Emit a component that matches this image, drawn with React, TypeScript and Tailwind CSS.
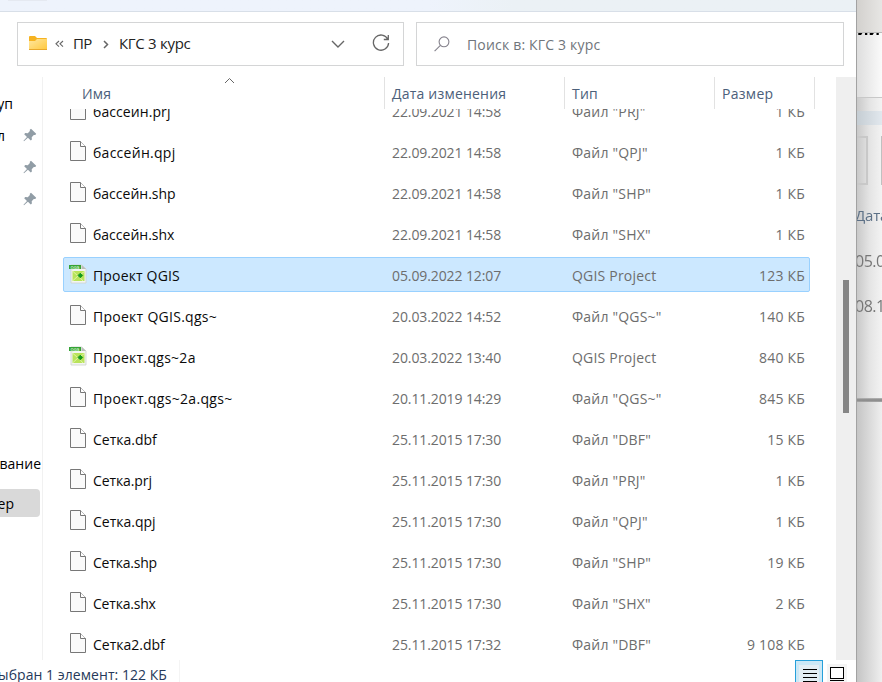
import React from "react";

type Row = { name: string; date: string; type: string; size: string; qgis?: boolean; selected?: boolean; tracking: string };

const wide = "tracking-[0.27px]";
const mid = "tracking-[0.16px]";
const tight = "tracking-[0px]";

const rows: Row[] = [
  { name: "бассейн.prj", date: "22.09.2021 14:58", type: 'Файл "PRJ"', size: "1 КБ", tracking: "tracking-[0.08px]" },
  { name: "бассейн.qpj", date: "22.09.2021 14:58", type: 'Файл "QPJ"', size: "1 КБ", tracking: wide },
  { name: "бассейн.shp", date: "22.09.2021 14:58", type: 'Файл "SHP"', size: "1 КБ", tracking: tight },
  { name: "бассейн.shx", date: "22.09.2021 14:58", type: 'Файл "SHX"', size: "1 КБ", tracking: tight },
  { name: "Проект QGIS", date: "05.09.2022 12:07", type: "QGIS Project", size: "123 КБ", qgis: true, selected: true, tracking: mid },
  { name: "Проект QGIS.qgs~", date: "20.03.2022 14:52", type: 'Файл "QGS~"', size: "140 КБ", tracking: wide },
  { name: "Проект.qgs~2a", date: "20.03.2022 13:40", type: "QGIS Project", size: "840 КБ", qgis: true, tracking: wide },
  { name: "Проект.qgs~2a.qgs~", date: "20.11.2019 14:29", type: 'Файл "QGS~"', size: "845 КБ", tracking: "tracking-[0.33px]" },
  { name: "Сетка.dbf", date: "25.11.2015 17:30", type: 'Файл "DBF"', size: "15 КБ", tracking: tight },
  { name: "Сетка.prj", date: "25.11.2015 17:30", type: 'Файл "PRJ"', size: "1 КБ", tracking: "tracking-[-0.1px]" },
  { name: "Сетка.qpj", date: "25.11.2015 17:30", type: 'Файл "QPJ"', size: "1 КБ", tracking: tight },
  { name: "Сетка.shp", date: "25.11.2015 17:30", type: 'Файл "SHP"', size: "19 КБ", tracking: "tracking-[-0.2px]" },
  { name: "Сетка.shx", date: "25.11.2015 17:30", type: 'Файл "SHX"', size: "2 КБ", tracking: "tracking-[-0.2px]" },
  { name: "Сетка2.dbf", date: "25.11.2015 17:32", type: 'Файл "DBF"', size: "9 108 КБ", tracking: tight },
];

function FileIcon() {
  return (
    <svg width="16" height="20" viewBox="0 0 16 20" fill="none" className="block">
      <path d="M.5 .5H10.5L15.5 5.5V19.5H.5Z" fill="#fafafa" stroke="#777" />
      <path d="M10.5 .5V5.5H15.5" fill="#fff" stroke="#777" />
    </svg>
  );
}

function QgisIcon() {
  return (
    <svg width="18" height="20" viewBox="0 0 18 20" className="block">
      <path d="M2 1H13L17 5V19H2Z" fill="#f3f5f2" stroke="#cdd2cd" strokeWidth=".8" />
      <path d="M12.5 1V5H17Z" fill="#b9bdb9" />
      <rect x="0" y="1" width="12" height="4" fill="#35a336" />
      <text x="6" y="4.5" textAnchor="middle" fontSize="4" fontWeight="700" fill="#d8f5d0" fontFamily="Liberation Sans, sans-serif">QGS</text>
      <rect x="3.5" y="7" width="12" height="10" fill="#b9e35a" />
      <path d="M3.5 7 9 12 15.5 7.5M9 12 3.5 17M10 12.5 14 17" stroke="#e9f7b8" strokeWidth=".8" fill="none" />
      <path d="M11.3 9.2 13.6 11.5 11.3 13.8 9 11.5Z" fill="#159a1b" stroke="#159a1b" strokeLinejoin="round" />
    </svg>
  );
}

function Pin() {
  return (
    <svg width="14" height="14" viewBox="0 0 14 14" className="block">
      <path d="M8 .8 13.2 5.8 12.3 7 10.8 6.9 8.7 9.2 8.9 11.6 7.8 12.6 4.9 9.8 1 13.2.5 12.8 4 8.9 1.2 6.2 2.2 5.1 4.8 5.2 6.9 3.1 6.8 1.8Z" fill="#919da6" />
    </svg>
  );
}

function NavigationBar() {
  return (
    <div className="flex h-[65px] shrink-0 pt-2.5 pl-[17px]">
      <div className="flex h-11 w-[387px] items-center border border-[#d4d5d6]">
        <svg width="20" height="16" viewBox="0 0 20 16" className="-mt-0.5 ml-2.5 shrink-0">
          <defs>
            <linearGradient id="folder" x1="0" y1="0" x2="1" y2="1">
              <stop offset="0" stopColor="#ffe7a0" />
              <stop offset="1" stopColor="#ffc83c" />
            </linearGradient>
          </defs>
          <path d="M1 2Q1 1 2 1H7L9 3H18Q19 3 19 4V14H1Z" fill="#f6b321" />
          <path d="M1 6H7L9 4H19V14Q19 15 18 15H2Q1 15 1 14Z" fill="url(#folder)" />
          <path d="M1 14.5H19" stroke="#e9a82c" />
        </svg>
        <svg width="9" height="8" viewBox="0 0 9 8" fill="none" stroke="#666" strokeWidth="1.1" className="ml-[7px] shrink-0"><path d="M4 1 1 3.8 4 6.6M8 1 5 3.8 8 6.6" /></svg>
        <span className="ml-[9px] w-[22px] text-[15px] tracking-[-0.6px] text-[#222]">ПР</span>
        <svg width="6" height="9" viewBox="0 0 6 9" fill="none" stroke="#666" strokeWidth="1.5" className="ml-[8px] shrink-0"><path d="M1 1 4.5 4.5 1 8" /></svg>
        <span className="ml-[10px] w-[80px] text-[15px] tracking-[-0.3px] whitespace-nowrap text-[#222]">КГС 3 курс</span>
        <svg width="14" height="8" viewBox="0 0 14 8" fill="none" stroke="#666" strokeWidth="1.4" className="ml-auto shrink-0"><path d="M1 1 7 7 13 1" /></svg>
        <svg width="18" height="18" viewBox="0 0 18 18" fill="none" stroke="#666" strokeWidth="1.3" className="-mt-0.5 mr-[13px] ml-[27px] shrink-0"><path d="M15.8 5.2A7.6 7.6 0 1 0 16.6 9M16.3 1V5.5H11.8" /></svg>
      </div>
      <div className="ml-3 flex h-11 w-[428px] items-center border border-[#d4d5d6]">
        <svg width="16" height="16" viewBox="0 0 16 16" fill="none" stroke="#85828c" strokeWidth="1.1" className="ml-[17px]"><circle cx="10" cy="5.8" r="4.9" /><path d="M6.4 9.3.6 15.2" /></svg>
        <span className="ml-[17px] pt-0.5 tracking-[0.18px] text-[#70757b]">Поиск в: КГС 3 курс</span>
      </div>
    </div>
  );
}

function Sidebar() {
  return (
    <div className="flex w-[43px] shrink-0 flex-col overflow-hidden border-r border-[#f1f1f1] pt-[11px] text-black">
      <div className="flex h-8 w-[13px] items-center justify-end">уп</div>
      <div className="flex h-8 items-center">
        <span className="flex w-[5px] justify-end">л</span>
        <span className="-mt-0.5 ml-[18px]"><Pin /></span>
      </div>
      <div className="flex h-8 items-center pb-0.5 pl-[23px]"><Pin /></div>
      <div className="flex h-8 items-center pb-0.5 pl-[23px]"><Pin /></div>
      <div className="mt-[232px] flex h-8 w-[41px] items-center justify-end">вание</div>
      <div className="mt-[9px] flex h-7 w-10 shrink-0 items-center rounded-r-sm bg-[#d9d9d9]"><span className="flex w-3.5 justify-end pt-0.5">ер</span></div>
    </div>
  );
}

function FileTable() {
  return (
    <div className="flex min-w-0 flex-1 flex-col">
      <div className="flex h-8 shrink-0 text-[#4c607a]">
        <div className="flex w-[342px] border-r border-[#e2e2e2] pl-[39px]">
          <span className="w-[142px] pt-[7px] tracking-[0.2px]">Имя</span>
          <svg width="11" height="7" viewBox="0 0 11 7" fill="none" stroke="#666" className="shrink-0"><path d="M1 6 5.5 1.5 10 6" /></svg>
        </div>
        <div className="w-[180px] border-r border-[#e2e2e2] pt-[7px] pl-[7px] tracking-[0.2px]">Дата изменения</div>
        <div className="w-[150px] border-r border-[#e2e2e2] pt-[7px] pl-[7px] tracking-[0.2px]">Тип</div>
        <div className="w-[100px] border-r border-[#e2e2e2] pt-[7px] pl-[7px] tracking-[0.3px]">Размер</div>
      </div>
      <div className="min-h-0 flex-1 overflow-hidden">
        <div className="-mt-[19px] pl-5">
          {rows.map((r) => (
            <div key={r.name} className="flex h-[41px] items-center">
              <div className={r.selected ? "flex h-[35px] w-[747px] items-center rounded-xs border border-[#99d1ff] bg-[#cce8ff]" : "flex h-[35px] w-[747px] items-center border border-transparent"}>
                <span className={r.qgis ? "-mt-0.5 ml-[5px] w-6 shrink-0" : "-mt-0.5 ml-1.5 w-[23px] shrink-0"}>{r.qgis ? <QgisIcon /> : <FileIcon />}</span>
                <span className="w-[299px] pt-0.5 whitespace-nowrap text-[#0a0a0a]"><span className={r.tracking}>{r.name}</span></span>
                <span className="w-[180px] pt-0.5 tracking-[-0.1px] text-[#6d6d6d]">{r.date}</span>
                <span className="w-[140px] pt-0.5 tracking-[0.2px] text-[#6d6d6d]">{r.type}</span>
                <span className="flex-1 pt-0.5 pr-1 text-right tracking-[0.2px] text-[#6d6d6d]">{r.size}</span>
              </div>
            </div>
          ))}
        </div>
      </div>
    </div>
  );
}

function StatusBar() {
  return (
    <div className="flex h-[22px] shrink-0 justify-between overflow-hidden">
      <div className="flex w-[180px] justify-end border-r border-[#f4f4f4] pt-[5px] pr-3 leading-5 tracking-[0.05px] whitespace-nowrap text-[#26395a]">ыбран 1 элемент: 122 КБ</div>
      <div className="mr-[9px] flex items-start">
        <div className="flex h-8 w-7 justify-center border border-[#26a0da] bg-[#cbe8f6] pt-1">
          <div className="flex h-6 w-5 justify-center bg-[#e3eef4] pt-1 pl-px">
            <div className="flex flex-col gap-[3px]">
              {[0, 1, 2, 3].map((i) => <div key={i} className="h-px w-3.5 bg-black" />)}
            </div>
          </div>
        </div>
        <div className="mt-1 ml-1 flex h-6 w-5 flex-col items-center bg-[#f4f4f4] pt-[3px]">
          <div className="h-3 w-3.5 border border-black bg-white" />
          <div className="mt-px h-px w-3.5 bg-black" />
        </div>
      </div>
    </div>
  );
}

function BackgroundWindow() {
  return (
    <div className="flex w-[25px] shrink-0 flex-col overflow-hidden bg-[#f2f2f2] bg-linear-to-r from-[#c9c9c9] via-[#e4e4e4] to-[#f3f3f3] text-sm whitespace-nowrap text-[#777] blur-[0.3px]">
      <div className="h-[33px] shrink-0 border-b border-[#bbb] bg-linear-to-r from-[#d3d1ce] to-[#e7e6e4]" />
      <div className="flex h-[65px] shrink-0 border-b border-[#c8c8c8] bg-linear-to-r from-[#dedede] to-[#fafafa]">
        <div className="flex h-1 w-full items-end overflow-hidden text-base leading-[15px] font-bold text-black">ий с</div>
      </div>
      <div className="mt-[13px] h-3.5 shrink-0 bg-linear-to-r from-[#c5cdd3] to-[#e2e8ee]" />
      <div className="mt-[11px] flex h-[49px] shrink-0 justify-between">
        <div className="w-[11px] border-2 border-l-0 border-[#c8c8c8]" />
        <div className="w-px bg-[#c0c0c0]" />
      </div>
      <div className="mt-[18px] -ml-0.5 h-6 shrink-0 text-[15px] leading-6 font-medium tracking-[-0.2px] text-[#5c7086]">Дата</div>
      <div className="mt-[22px] -ml-0.5 h-6 shrink-0 text-base leading-6 font-medium tracking-[-0.5px]">05.09</div>
      <div className="mt-[21px] -ml-0.5 h-6 shrink-0 text-base leading-6 font-medium tracking-[-0.5px]">08.11</div>
      <div className="mt-[80px] h-1 shrink-0 bg-linear-to-b from-[#b9b9b9] via-[#858585] to-[#aaa]" />
      <div className="flex-1 bg-linear-to-r from-[#c5c5c5] to-[#efefef]" />
    </div>
  );
}

export default function App() {
  return (
    <div className="flex h-[682px] w-[882px] overflow-hidden bg-white font-['Open_Sans','Noto_Sans',sans-serif] text-sm">
      <div className="flex w-[857px] shrink-0 flex-col border-r border-[#a2a2a2]">
        <div className="h-3 shrink-0 border-b border-[#d8dfe8] bg-linear-to-r from-[#eef3fc] from-50% to-[#ebf1f5] to-60%"><div className="ml-2 h-px w-[39px] bg-[#e5e9f1]" /></div>
        <NavigationBar />
        <div className="flex min-h-0 flex-1">
          <Sidebar />
          <FileTable />
          <div className="w-5 shrink-0 bg-[#efefef] pt-[203px] pl-[7px]"><div className="h-[133px] w-1.5 bg-[#868686]" /></div>
        </div>
        <StatusBar />
      </div>
      <BackgroundWindow />
    </div>
  );
}
